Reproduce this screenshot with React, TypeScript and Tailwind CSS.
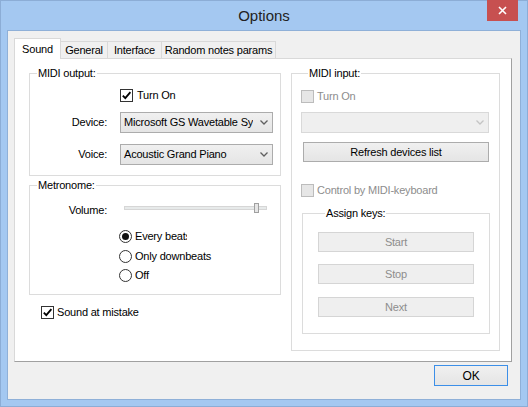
import React from 'react'

/* ── small win8-style controls ── */

function Chevron({ disabled }: { disabled?: boolean }) {
  return (
    <svg width="8" height="5" viewBox="0 0 8 5">
      <polyline
        points="0.5,0.5 4,4 7.5,0.5"
        fill="none"
        stroke={disabled ? '#c4c4c4' : '#606060'}
        strokeWidth="1.3"
      />
    </svg>
  )
}

function Combo({ value, disabled, width }: { value?: string; disabled?: boolean; width: string }) {
  return (
    <div
      className={
        disabled
          ? `flex h-[21px] items-center border border-[#d9d9d9] bg-[#efefef] ${width}`
          : `flex h-[21px] items-center border border-[#acacac] bg-gradient-to-b from-[#f0f0f0] to-[#e5e5e5] ${width}`
      }
    >
      <span className="flex-1 overflow-hidden whitespace-nowrap pl-[3px]">{value}</span>
      <span className="flex w-[19px] shrink-0 justify-center pl-[2px]">
        <Chevron disabled={disabled} />
      </span>
    </div>
  )
}

function CheckBox({ checked, disabled }: { checked?: boolean; disabled?: boolean }) {
  return (
    <span
      className={
        disabled
          ? 'flex size-[13px] shrink-0 items-center justify-center border border-[#bcbcbc] bg-[#e6e6e6]'
          : 'flex size-[13px] shrink-0 items-center justify-center border border-[#333333] bg-white'
      }
    >
      {checked && (
        <svg width="11" height="11" viewBox="0 0 11 11">
          <path d="M1.8 5.6 L4.3 8.2 L9.4 2.2" fill="none" stroke="#000" strokeWidth="1.8" />
        </svg>
      )}
    </span>
  )
}

function Radio({ checked }: { checked?: boolean }) {
  return (
    <span className="flex size-[13px] shrink-0 items-center justify-center rounded-full border border-[#333333] bg-white">
      {checked && <span className="size-[7px] rounded-full bg-[#111]" />}
    </span>
  )
}

function Button({ label, disabled, width }: { label: string; disabled?: boolean; width: string }) {
  return (
    <div
      className={
        disabled
          ? `flex h-[20px] items-center justify-center border border-[#d5d5d5] bg-[#efefef] text-[#8d8d8d] ${width}`
          : `flex h-[20px] items-center justify-center border border-[#acacac] bg-gradient-to-b from-[#f0f0f0] to-[#e5e5e5] ${width}`
      }
    >
      {label}
    </div>
  )
}

function Legend({ children, indent }: { children: React.ReactNode; indent: string }) {
  return <legend className={`px-[1px] leading-[14px] ${indent}`}>{children}</legend>
}

/* ── dialog ── */

const tabs = [
  { label: 'General', w: 'w-[47px]' },
  { label: 'Interface', w: 'w-[54px]' },
  { label: 'Random notes params', w: 'w-[114px]' },
]

export default function App() {
  return (
    <div className="relative h-[407px] w-[528px] border border-[#8cadd6] bg-[#a4c8f1] font-['Liberation_Sans',Arial,sans-serif] text-[11px] tracking-[-0.2px] text-black">
      {/* title bar */}
      <div className="flex h-[29px] items-center justify-center pt-[1px] text-[15px] tracking-normal text-[#222]">
        Options
      </div>
      <div className="absolute left-[486px] top-[-1px] flex h-[21px] w-[31px] items-center justify-center bg-[#c75050]">
        <svg width="9" height="9" viewBox="0 0 9 9">
          <path d="M1 1 L8 8 M8 1 L1 8" stroke="#fff" strokeWidth="1.6" />
        </svg>
      </div>

      {/* client area */}
      <div className="ml-[6px] h-[370px] w-[514px] border border-[#8fb0d8] bg-[#f0f0f0] pl-[6px] pr-[8px] pt-[7px]">
        {/* tab strip */}
        <div className="relative z-10 flex h-[20px] items-end">
          <div className="-mb-px flex h-[21px] w-[47px] items-center justify-center border border-b-0 border-[#d9d9d9] bg-white">
            Sound
          </div>
          {tabs.map(t => (
            <div
              key={t.label}
              className={`flex h-[17px] items-center justify-center border-r border-t border-[#d9d9d9] bg-[#f0f0f0] ${t.w}`}
            >
              {t.label}
            </div>
          ))}
        </div>

        {/* tab page */}
        <div className="flex h-[304px] w-[498px] gap-[10px] border border-[#d9d9d9] border-b-[#a0a0a0] border-r-[#a0a0a0] bg-white pl-[14px] pt-[7px]">
          {/* left column */}
          <div className="flex w-[252px] flex-col">
            <fieldset className="w-[252px] border border-[#dcdcdc] pb-[10px]">
              <Legend indent="ml-[7px]">MIDI output:</Legend>
              <div className="mt-[9px] flex h-[13px] items-center pl-[90px]">
                <CheckBox checked />
                <span className="ml-[4px]">Turn On</span>
              </div>
              <div className="mt-[10px] flex h-[21px] items-center">
                <span className="w-[77px] text-right">Device:</span>
                <div className="ml-[13px]">
                  <Combo value="Microsoft GS Wavetable Synth" width="w-[153px]" />
                </div>
              </div>
              <div className="mt-[11px] flex h-[21px] items-center">
                <span className="w-[77px] text-right">Voice:</span>
                <div className="ml-[13px]">
                  <Combo value="Acoustic Grand Piano" width="w-[153px]" />
                </div>
              </div>
            </fieldset>

            <fieldset className="mt-[2px] w-[252px] border border-[#dcdcdc] pb-[12px]">
              <Legend indent="ml-[7px]">Metronome:</Legend>
              <div className="mt-[10px] flex h-[16px] items-center">
                <span className="w-[77px] text-right">Volume:</span>
                <div className="relative ml-[17px] mt-[-5px] h-[10px] w-[143px]">
                  <div className="mt-[3px] h-[4px] border border-[#d6d6d6] bg-[#e7eaea]" />
                  <div className="absolute left-[130px] top-0 h-[10px] w-[5px] border border-[#a0a0a0] bg-[#e6e6e6]" />
                </div>
              </div>
              <div className="mt-[12px] flex h-[13px] items-center pl-[89px]">
                <Radio checked />
                <span className="ml-[3px] w-[52px] overflow-hidden whitespace-nowrap">Every beats</span>
              </div>
              <div className="mt-[7px] flex h-[13px] items-center pl-[89px]">
                <Radio />
                <span className="ml-[3px]">Only downbeats</span>
              </div>
              <div className="mt-[6px] flex h-[13px] items-center pl-[89px]">
                <Radio />
                <span className="ml-[3px]">Off</span>
              </div>
            </fieldset>

            <div className="mt-[11px] flex h-[13px] items-center pl-[12px]">
              <CheckBox checked />
              <span className="ml-[3px]">Sound at mistake</span>
            </div>
          </div>

          {/* right column */}
          <fieldset className="w-[209px] self-start border border-[#dcdcdc] pb-[16px] pl-[9px]">
            <Legend indent="ml-[7px]">MIDI input:</Legend>
            <div className="mt-[10px] flex h-[13px] items-center">
              <CheckBox disabled />
              <span className="ml-[3px] text-[#8d8d8d]">Turn On</span>
            </div>
            <div className="mt-[9px]">
              <Combo disabled width="w-[188px]" />
            </div>
            <div className="ml-[2px] mt-[9px]">
              <Button label="Refresh devices list" width="w-[186px]" />
            </div>
            <div className="mt-[22px] flex h-[13px] items-center">
              <CheckBox disabled />
              <span className="ml-[3px] text-[#8d8d8d]">Control by MIDI-keyboard</span>
            </div>
            <fieldset className="ml-[1px] mt-[9px] w-[188px] border border-[#dcdcdc] pb-[16px] pl-[15px]">
              <Legend indent="ml-[7px]">Assign keys:</Legend>
              <div className="mt-[12px]">
                <Button label="Start" disabled width="w-[156px]" />
              </div>
              <div className="mt-[12px]">
                <Button label="Stop" disabled width="w-[156px]" />
              </div>
              <div className="mt-[13px]">
                <Button label="Next" disabled width="w-[156px]" />
              </div>
            </fieldset>
          </fieldset>
        </div>

        {/* footer */}
        <div className="mr-[4px] mt-[3px] flex justify-end">
          <div className="flex h-[21px] w-[74px] items-center justify-center border border-[#3c8fe8] bg-gradient-to-b from-[#f0f0f0] to-[#e5e5e5] text-[12px]">
            OK
          </div>
        </div>
      </div>
    </div>
  )
}
